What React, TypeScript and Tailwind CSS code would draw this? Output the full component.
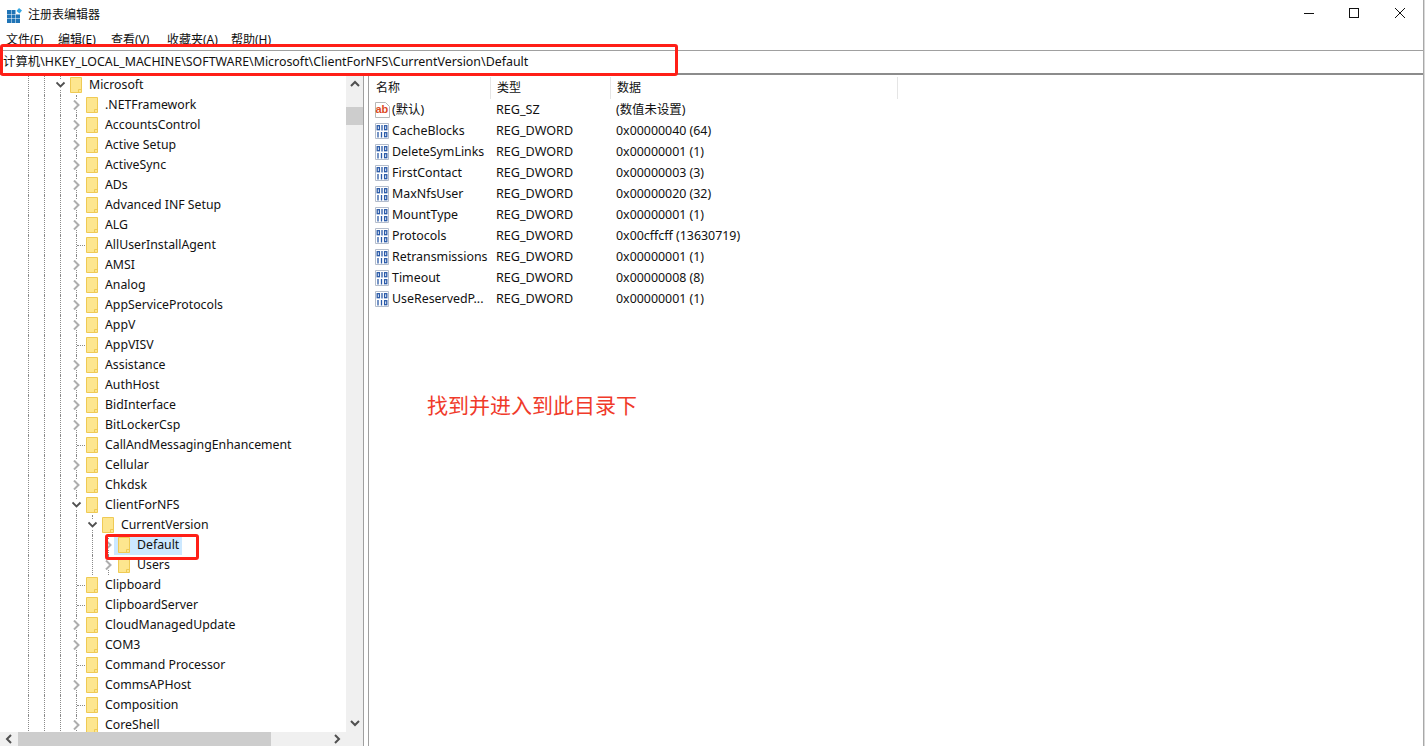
const font = { fontFamily: '"Noto Sans", "Noto Sans CJK SC", sans-serif' };

type Node = { name: string; level: number; state: 'open' | 'closed' | 'leaf'; selected?: boolean };

const tree: Node[] = [
  { name: 'Microsoft', level: 0, state: 'open' },
  { name: '.NETFramework', level: 1, state: 'closed' },
  { name: 'AccountsControl', level: 1, state: 'closed' },
  { name: 'Active Setup', level: 1, state: 'closed' },
  { name: 'ActiveSync', level: 1, state: 'closed' },
  { name: 'ADs', level: 1, state: 'closed' },
  { name: 'Advanced INF Setup', level: 1, state: 'closed' },
  { name: 'ALG', level: 1, state: 'closed' },
  { name: 'AllUserInstallAgent', level: 1, state: 'leaf' },
  { name: 'AMSI', level: 1, state: 'closed' },
  { name: 'Analog', level: 1, state: 'closed' },
  { name: 'AppServiceProtocols', level: 1, state: 'closed' },
  { name: 'AppV', level: 1, state: 'closed' },
  { name: 'AppVISV', level: 1, state: 'leaf' },
  { name: 'Assistance', level: 1, state: 'closed' },
  { name: 'AuthHost', level: 1, state: 'closed' },
  { name: 'BidInterface', level: 1, state: 'closed' },
  { name: 'BitLockerCsp', level: 1, state: 'closed' },
  { name: 'CallAndMessagingEnhancement', level: 1, state: 'leaf' },
  { name: 'Cellular', level: 1, state: 'closed' },
  { name: 'Chkdsk', level: 1, state: 'closed' },
  { name: 'ClientForNFS', level: 1, state: 'open' },
  { name: 'CurrentVersion', level: 2, state: 'open' },
  { name: 'Default', level: 3, state: 'closed', selected: true },
  { name: 'Users', level: 3, state: 'closed' },
  { name: 'Clipboard', level: 1, state: 'leaf' },
  { name: 'ClipboardServer', level: 1, state: 'leaf' },
  { name: 'CloudManagedUpdate', level: 1, state: 'closed' },
  { name: 'COM3', level: 1, state: 'closed' },
  { name: 'Command Processor', level: 1, state: 'leaf' },
  { name: 'CommsAPHost', level: 1, state: 'closed' },
  { name: 'Composition', level: 1, state: 'leaf' },
  { name: 'CoreShell', level: 1, state: 'closed' },
];

const values = [
  { name: '(默认)', type: 'REG_SZ', data: '(数值未设置)', sz: true },
  { name: 'CacheBlocks', type: 'REG_DWORD', data: '0x00000040 (64)' },
  { name: 'DeleteSymLinks', type: 'REG_DWORD', data: '0x00000001 (1)' },
  { name: 'FirstContact', type: 'REG_DWORD', data: '0x00000003 (3)' },
  { name: 'MaxNfsUser', type: 'REG_DWORD', data: '0x00000020 (32)' },
  { name: 'MountType', type: 'REG_DWORD', data: '0x00000001 (1)' },
  { name: 'Protocols', type: 'REG_DWORD', data: '0x00cffcff (13630719)' },
  { name: 'Retransmissions', type: 'REG_DWORD', data: '0x00000001 (1)' },
  { name: 'Timeout', type: 'REG_DWORD', data: '0x00000008 (8)' },
  { name: 'UseReservedP...', type: 'REG_DWORD', data: '0x00000001 (1)' },
];

function Folder() {
  return (
    <svg width="12" height="16" viewBox="0 0 12 16" className="shrink-0">
      <path d="M0.5 0.5H11.5V15.5H0.5Z" fill="#fde68f" stroke="#efca55" />
      <path d="M8.5 15.5V12.5H11.5" fill="none" stroke="#efca55" />
    </svg>
  );
}

function Chevron({ open }: { open: boolean }) {
  return open ? (
    <svg width="10" height="10" viewBox="0 0 10 10" className="absolute -left-[5px] top-[5px] bg-white">
      <path d="M0.5 2.5L4.5 6.5L8.5 2.5" fill="none" stroke="#505050" strokeWidth="1.8" />
    </svg>
  ) : (
    <svg width="10" height="10" viewBox="0 0 10 10" className="absolute -left-[5px] top-[5px] bg-white">
      <path d="M2 0.5L6.5 5L2 9.5" fill="none" stroke="#adadad" strokeWidth="2" />
    </svg>
  );
}

function TreeRow({ node }: { node: Node }) {
  const guides = Array.from({ length: node.level + 2 });
  return (
    <div className="flex h-5 shrink-0 items-center pl-[28px] text-[12.3px] text-[#111]">
      {guides.map((_, i) => (
        <div key={i} className="h-5 w-4 shrink-0 border-l border-dotted border-[#8a8a8a]" />
      ))}
      <div className="relative flex h-5 w-[10px] shrink-0 items-center border-l border-dotted border-[#8a8a8a]">
        {node.state === 'leaf' ? (
          <div className="w-2 border-t border-dotted border-[#8a8a8a]" />
        ) : (
          <Chevron open={node.state === 'open'} />
        )}
      </div>
      <div className={node.selected ? '-ml-1 flex h-5 w-[68px] shrink-0 items-center bg-[#cce8ff] pl-1' : 'flex shrink-0 items-center'}>
        <Folder />
        <span className="ml-[7px] whitespace-nowrap">{node.name}</span>
      </div>
    </div>
  );
}

function DwordIcon() {
  return (
    <svg width="16" height="16" viewBox="0 0 16 16" className="shrink-0">
      <path d="M1.5 0.5H14.5V15.5H1.5Z" fill="#fff" stroke="#b4bdcc" />
      <g fill="none" stroke="#2a5aa8" strokeWidth="1.3">
        <rect x="3.2" y="2.7" width="2.2" height="4" />
        <path d="M8 2V7.5" />
        <rect x="10.6" y="2.7" width="2.2" height="4" />
        <path d="M4 9V14.5" />
        <path d="M7.5 9V14.5" />
        <rect x="10.6" y="9.7" width="2.2" height="4" />
      </g>
    </svg>
  );
}

function SzIcon() {
  return (
    <svg width="16" height="16" viewBox="0 0 16 16" className="shrink-0">
      <path d="M1.5 0.5H11.5L15.5 4.5V15.5H1.5Z" fill="#fff" stroke="#b8b8b8" />
      <text x="1.5" y="11" fontSize="11" fontWeight="700" fill="#dc4a24" fontFamily="Liberation Sans">ab</text>
    </svg>
  );
}

function Arrow({ d }: { d: string }) {
  return (
    <svg width="10" height="10" viewBox="0 0 10 10">
      <path d={d} fill="none" stroke="#505050" strokeWidth="2" />
    </svg>
  );
}

function HeaderCell({ label, width }: { label: string; width: string }) {
  return (
    <div className={`${width} flex h-[22px] shrink-0 items-center border-r border-[#e5e5e5] pl-[6px]`}>{label}</div>
  );
}

export default function App() {
  return (
    <div style={font} className="relative flex h-[746px] w-[1425px] overflow-hidden bg-white text-[12px] text-[#111]">
      <div className="flex min-w-0 flex-1 flex-col border-r border-[#a8a8a8]">
        <div className="flex h-[30px] shrink-0 items-center pl-[7px]">
          <svg width="15" height="15" viewBox="0 0 15 15" className="shrink-0">
            <g fill="#1f74b6">
              <rect x="0" y="2" width="4" height="4" />
              <rect x="4.5" y="2" width="4" height="4" />
              <rect x="0" y="6.5" width="4" height="4" />
              <rect x="4.5" y="6.5" width="4" height="4" />
              <rect x="9" y="6.5" width="4" height="4" />
              <rect x="0" y="11" width="4" height="4" />
              <rect x="4.5" y="11" width="4" height="4" />
              <rect x="9" y="11" width="4" height="4" />
            </g>
            <path d="M12 0L15 2.5L12.5 5.5L9.5 3Z" fill="#35a6e0" />
          </svg>
          <span className="ml-[6px]">注册表编辑器</span>
          <div className="mb-1 ml-auto flex items-center">
            <svg width="12" height="12" viewBox="0 0 12 12" className="mr-[33px]"><path d="M1 6.5H11" stroke="#111" /></svg>
            <svg width="12" height="12" viewBox="0 0 12 12" className="mr-[34px]"><rect x="1.5" y="1.5" width="9" height="9" fill="none" stroke="#111" /></svg>
            <svg width="12" height="12" viewBox="0 0 12 12" className="mr-[17px]"><path d="M1 1L11 11M11 1L1 11" stroke="#111" /></svg>
          </div>
        </div>

        <div className="flex h-[20px] shrink-0 items-center pl-[6px]">
          <span className="w-[52px]">文件(F)</span>
          <span className="w-[53px]">编辑(E)</span>
          <span className="w-[56px]">查看(V)</span>
          <span className="w-[64px]">收藏夹(A)</span>
          <span>帮助(H)</span>
        </div>

        <div className="flex h-[25px] shrink-0 items-center border-t border-b-2 border-t-[#a0a0a0] border-b-[#8c8c8c] pl-[3px] text-[12.4px]">
          计算机\HKEY_LOCAL_MACHINE\SOFTWARE\Microsoft\ClientForNFS\CurrentVersion\Default
        </div>

        <div className="flex min-h-0 flex-1">
          <div className="flex w-[363px] shrink-0">
            <div className="flex w-[346px] shrink-0 flex-col">
              <div className="flex min-h-0 flex-1 flex-col overflow-hidden">
                {tree.map((node) => (
                  <TreeRow key={node.name} node={node} />
                ))}
              </div>
              <div className="flex h-[14px] shrink-0 items-center bg-[#f0f0f0]">
                <div className="flex w-[18px] justify-center"><Arrow d="M7 1L3 5L7 9" /></div>
                <div className="h-full w-[253px] bg-[#cdcdcd]" />
                <div className="ml-auto flex w-[18px] justify-center"><Arrow d="M3 1L7 5L3 9" /></div>
              </div>
            </div>
            <div className="flex w-[17px] shrink-0 flex-col items-center bg-[#f0f0f0]">
              <div className="flex h-[18px] items-center"><Arrow d="M1 7L5 3L9 7" /></div>
              <div className="mt-[14px] h-[18px] w-full bg-[#cdcdcd]" />
              <div className="mt-auto mb-[18px] flex h-[10px] items-center"><Arrow d="M1 3L5 7L9 3" /></div>
            </div>
          </div>
          <div className="w-[6px] shrink-0 border-x border-[#a0a0a0]" />

          <div className="min-w-0 flex-1 text-[12.4px]">
            <div className="flex h-[25px] items-center pl-px text-[12px]">
              <HeaderCell label="名称" width="w-[121px]" />
              <HeaderCell label="类型" width="w-[120px]" />
              <HeaderCell label="数据" width="w-[287px]" />
            </div>
            {values.map((v) => (
              <div key={v.name} className="flex h-[21px] items-center pl-[5px]">
                <div className="flex w-[122px] shrink-0 items-center gap-[2px]">
                  {v.sz ? <SzIcon /> : <DwordIcon />}
                  <span className="whitespace-nowrap">{v.name}</span>
                </div>
                <span className="w-[120px] shrink-0 text-[12.6px]">{v.type}</span>
                <span className="whitespace-nowrap">{v.data}</span>
              </div>
            ))}
          </div>
        </div>
      </div>
      <div className="w-px shrink-0 bg-[#d8d8d8]" />

      {/* red annotations pasted over the screenshot */}
      <div className="absolute left-0 top-[44px] h-[32px] w-[678px] rounded-[3px] border-[3px] border-[#ff1f17]" />
      <div className="absolute left-[105px] top-[534px] h-[26px] w-[94px] rounded-[3px] border-[3px] border-[#ff1f17]" />
      <div className="absolute left-[427px] top-[391px] text-[21px] leading-[28px] text-[#f03a2a]">找到并进入到此目录下</div>
    </div>
  );
}
